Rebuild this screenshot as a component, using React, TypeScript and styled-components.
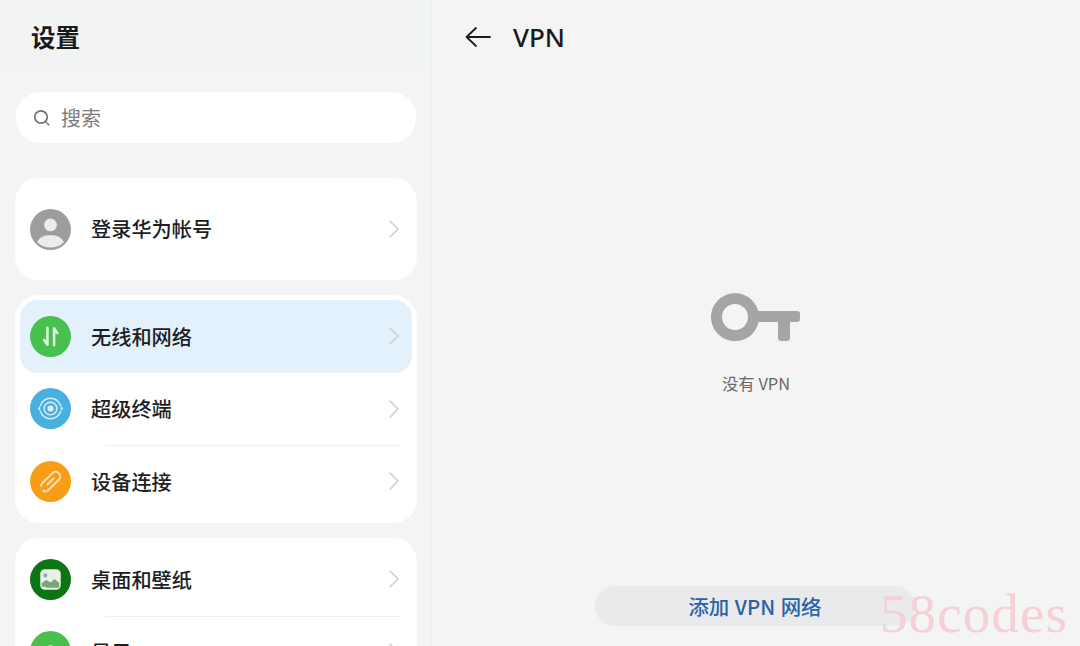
import styled, { createGlobalStyle } from 'styled-components';
import { ReactNode } from 'react';

const GlobalStyle = createGlobalStyle`
  html, body {
    margin: 0;
    padding: 0;
    background: #f4f4f5;
  }
  * {
    box-sizing: border-box;
  }
`;

const ChevronIcon = () => (
  <Chevron viewBox="0 0 12 20">
    <path d="M2 2l8 8-8 8" fill="none" stroke="#cdcfd0" strokeWidth="1.7" strokeLinecap="round" strokeLinejoin="round" />
  </Chevron>
);

const AvatarIcon = () => (
  <IconSvg viewBox="0 0 40 40">
    <circle cx="20" cy="20" r="20" fill="#9d9d9e" />
    <circle cx="20" cy="15.5" r="6.2" fill="#ececec" />
    <path d="M7 32.5C9 27 14 25.5 20 25.5s11 1.5 13 7a19 19 0 0 1-26 0z" fill="#ececec" />
  </IconSvg>
);

const WirelessIcon = () => (
  <IconSvg viewBox="0 0 40 40">
    <circle cx="20" cy="20" r="20" fill="#48c04e" />
    <path d="M17 11.5v16.5l-3.2-4.5M23.5 28.5V12l3.2 4.5" fill="none" stroke="#dff5df" strokeWidth="2.5" strokeLinecap="round" strokeLinejoin="round" />
  </IconSvg>
);

const TerminalIcon = () => (
  <IconSvg viewBox="0 0 40 40">
    <circle cx="20" cy="20" r="20" fill="#49aee0" />
    <circle cx="20" cy="20" r="3" fill="#d8eefa" />
    <circle cx="20" cy="20" r="6.2" fill="none" stroke="#d8eefa" strokeWidth="1.5" />
    <path d="M10 17.5a10.4 10.4 0 0 1 20 0M30 22.5a10.4 10.4 0 0 1-20 0" fill="none" stroke="#d8eefa" strokeWidth="1.4" />
    <path d="M7.5 20l2.5-2.6v5.2zM32.5 20L30 17.4v5.2z" fill="#d8eefa" />
  </IconSvg>
);

const LinkIcon = () => (
  <IconSvg viewBox="0 0 40 40">
    <circle cx="20" cy="20" r="20" fill="#f99d17" />
    <rect
      x="15.5"
      y="8.5"
      width="9"
      height="23"
      rx="4.5"
      transform="rotate(45 20 20)"
      fill="none"
      stroke="#fde0ae"
      strokeWidth="2"
      strokeDasharray="27 4"
    />
    <path d="M17 23l6-6" stroke="#fde0ae" strokeWidth="2" strokeLinecap="round" />
  </IconSvg>
);

const WallpaperIcon = () => (
  <IconSvg viewBox="0 0 40 40">
    <circle cx="20" cy="20" r="20" fill="#0b7413" />
    <rect x="10" y="10" width="20" height="20" rx="4.5" fill="#e8f1e6" />
    <circle cx="15" cy="16" r="2" fill="#9aa7b5" />
    <path d="M11.5 27v-3.5l4.5-3 4 2.5 4-3.5 4.5 4V27a1 1 0 0 1-1 1h-11.5a1 1 0 0 1-.5-1z" fill="#76a877" />
  </IconSvg>
);

const DisplayIcon = () => (
  <IconSvg viewBox="0 0 40 40">
    <circle cx="20" cy="20" r="20" fill="#48c04e" />
    <circle cx="20" cy="20" r="6" fill="#dff5df" />
  </IconSvg>
);

interface SettingRowProps {
  icon: ReactNode;
  label: string;
  active?: boolean;
  divided?: boolean;
}

const SettingRow = ({ icon, label, active, divided }: SettingRowProps) => (
  <Row $active={active} $divided={divided}>
    {icon}
    <RowLabel>{label}</RowLabel>
    <ChevronIcon />
  </Row>
);

const App = () => {
  return (
    <Page>
      <GlobalStyle />
      <Sidebar>
        <SidebarHeader>
          <SidebarTitle>设置</SidebarTitle>
        </SidebarHeader>
        <SearchBar>
          <svg width="20" height="20" viewBox="0 0 20 20">
            <circle cx="9" cy="9" r="6.2" fill="none" stroke="#6f7172" strokeWidth="1.7" />
            <path d="M13.8 13.8l3 3" stroke="#8a8c8d" strokeWidth="1.7" strokeLinecap="round" />
          </svg>
          <SearchText>搜索</SearchText>
        </SearchBar>
        <AccountCard>
          <AvatarIcon />
          <AccountLabel>登录华为帐号</AccountLabel>
          <ChevronIcon />
        </AccountCard>
        <Card>
          <SettingRow icon={<WirelessIcon />} label="无线和网络" active />
          <SettingRow icon={<TerminalIcon />} label="超级终端" />
          <SettingRow icon={<LinkIcon />} label="设备连接" divided />
        </Card>
        <Card>
          <SettingRow icon={<WallpaperIcon />} label="桌面和壁纸" />
          <SettingRow icon={<DisplayIcon />} label="显示" divided />
        </Card>
      </Sidebar>
      <Content>
        <ContentHeader>
          <svg width="28" height="24" viewBox="0 0 28 24">
            <path d="M26 12H3M12 3l-9.5 9 9.5 9" fill="none" stroke="#1c1c1c" strokeWidth="1.8" strokeLinecap="round" strokeLinejoin="round" />
          </svg>
          <ContentTitle>VPN</ContentTitle>
        </ContentHeader>
        <EmptyState>
          <svg width="90" height="49" viewBox="0 0 90 49">
            <path
              fillRule="evenodd"
              fill="#a5a5a5"
              d="M47.2 18H86a3 3 0 0 1 3 3v5a3 3 0 0 1-3 3h-7v16a3 3 0 0 1-3 3h-6a3 3 0 0 1-3-3V29H47.5A24 24 0 1 1 47.2 18zM24 11a13 13 0 1 0 0 26 13 13 0 0 0 0-26z"
            />
          </svg>
          <EmptyText>没有 VPN</EmptyText>
        </EmptyState>
        <AddButton>添加 VPN 网络</AddButton>
      </Content>
      <Watermark>58codes</Watermark>
    </Page>
  );
};

export default App;

const Page = styled.div`
  position: relative;
  display: flex;
  width: 1080px;
  height: 646px;
  overflow: hidden;
  background: #f4f4f5;
  font-family: 'Noto Sans CJK SC', 'Liberation Sans', sans-serif;
`;

const Sidebar = styled.aside`
  display: flex;
  flex-direction: column;
  flex-shrink: 0;
  width: 432px;
  height: 646px;
  overflow: hidden;
  padding: 0 15px;
  border-right: 2px solid #edf0f0;
`;

const SidebarHeader = styled.header`
  display: flex;
  align-items: center;
  flex-shrink: 0;
  height: 76px;
  margin: 0 -15px;
  padding: 0 0 1px 31px;
  background: linear-gradient(#f2f3f3 85%, #f4f4f5);
`;

const SidebarTitle = styled.h1`
  margin: 0;
  font-size: 24.5px;
  font-weight: 700;
  line-height: 1;
  color: #1a1a1a;
`;

const SearchBar = styled.div`
  display: flex;
  align-items: center;
  flex-shrink: 0;
  gap: 9px;
  width: 400px;
  height: 51px;
  margin: 16px 0 35px 1px;
  padding-left: 16px;
  border-radius: 25px;
  background: #ffffff;
`;

const SearchText = styled.span`
  font-size: 20px;
  color: #7c7c7c;
`;

const AccountCard = styled.section`
  display: flex;
  align-items: center;
  flex-shrink: 0;
  width: 402px;
  height: 102px;
  margin-bottom: 15px;
  padding: 0 17px 0 15px;
  border-radius: 24px;
  background: #ffffff;
`;

const Card = styled.section`
  flex-shrink: 0;
  width: 402px;
  margin-bottom: 15.5px;
  padding: 5px;
  border-radius: 24px;
  background: #ffffff;
`;

const Row = styled.div<{ $active?: boolean; $divided?: boolean }>`
  position: relative;
  display: flex;
  align-items: center;
  height: 72.5px;
  padding: 0 12px 0 10px;
  border-radius: 18px;
  background: ${({ $active }) => ($active ? '#e3f1fd' : 'transparent')};

  &::before {
    content: ${({ $divided }) => ($divided ? "''" : 'none')};
    position: absolute;
    top: 0;
    left: 85px;
    right: 12px;
    height: 1px;
    background: #eeeeee;
  }
`;

const IconSvg = styled.svg`
  flex-shrink: 0;
  width: 41px;
  height: 41px;
`;

const RowLabel = styled.span`
  flex: 1;
  margin-left: 20px;
  font-size: 20.2px;
  font-weight: 500;
  color: #1e1e1e;
`;

const AccountLabel = styled(RowLabel)`
  padding-bottom: 2px;
`;

const Chevron = styled.svg`
  flex-shrink: 0;
  width: 12px;
  height: 20px;
`;

const Content = styled.main`
  display: flex;
  flex-direction: column;
  flex: 1;
  height: 646px;
`;

const ContentHeader = styled.header`
  display: flex;
  align-items: center;
  flex-shrink: 0;
  gap: 21px;
  height: 74px;
  padding-left: 32px;
`;

const ContentTitle = styled.h2`
  margin: 0;
  font-family: 'Noto Sans', 'Liberation Sans', sans-serif;
  font-size: 26px;
  font-weight: 500;
  color: #1a1a1a;
`;

const EmptyState = styled.div`
  display: flex;
  flex-direction: column;
  align-items: center;
  gap: 28px;
  margin-top: 219px;
`;

const EmptyText = styled.span`
  font-size: 16.4px;
  line-height: 24px;
  margin-top: 1px;
  color: #696969;
`;

const AddButton = styled.button`
  display: block;
  flex-shrink: 0;
  width: 320px;
  height: 40px;
  margin: auto 0 20px 163px;
  padding: 0 0 1px;
  border: 0;
  border-radius: 20px;
  background: #e9eaec;
  font-family: inherit;
  font-size: 20.4px;
  font-weight: 500;
  word-spacing: 1px;
  color: #2a62aa;
`;

const Watermark = styled.div`
  position: absolute;
  left: 880px;
  top: 584px;
  font-family: 'Liberation Serif', serif;
  font-size: 55px;
  line-height: 60px;
  letter-spacing: 1.1px;
  color: #f5d0d5;
  pointer-events: none;
`;
